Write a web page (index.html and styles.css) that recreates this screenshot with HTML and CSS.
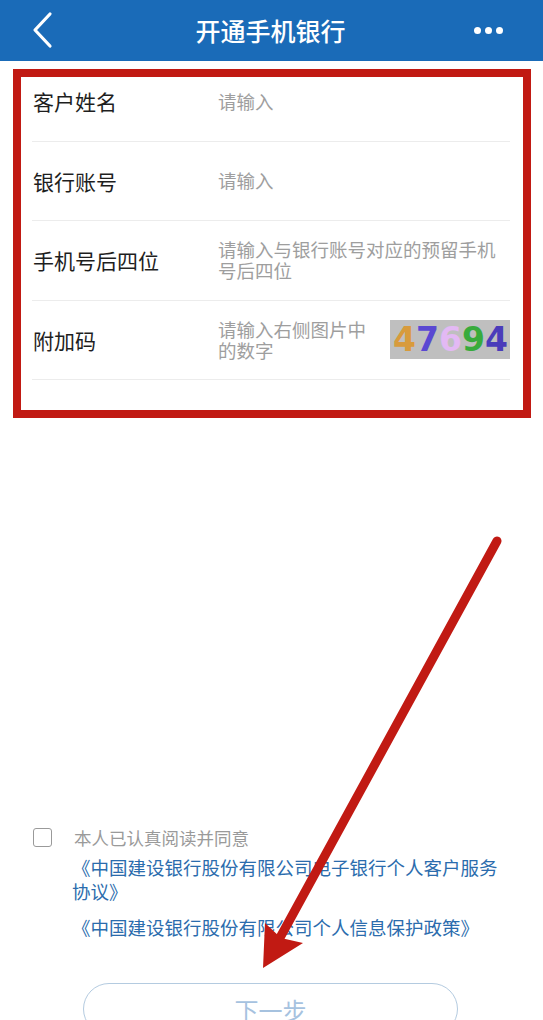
FILE: index.html
```html
<!DOCTYPE html>
<html lang="zh-CN">
<head>
<meta charset="utf-8">
<title>开通手机银行</title>
<link rel="stylesheet" href="styles.css">
</head>
<body>
<div class="page">
  <header class="topbar">
    <svg class="back" width="24" height="40" viewBox="0 0 24 40"><polyline points="19,3 4,19 19,35" fill="none" stroke="#fff" stroke-width="3.2" stroke-linecap="round" stroke-linejoin="round"/></svg>
    <h1 class="title">开通手机银行</h1>
    <div class="more"><span></span><span></span><span></span></div>
  </header>

  <section class="form">
    <div class="row"><div class="label">客户姓名</div><div class="ph">请输入</div></div>
    <div class="row"><div class="label">银行账号</div><div class="ph">请输入</div></div>
    <div class="row"><div class="label">手机号后四位</div><div class="ph wide">请输入与银行账号对应的预留手机号后四位</div></div>
    <div class="row"><div class="label">附加码</div><div class="ph narrow">请输入右侧图片中的数字</div>
      <div class="captcha"><span class="d1">4</span><span class="d2">7</span><span class="d3">6</span><span class="d4">9</span><span class="d5">4</span></div>
    </div>
  </section>

  <section class="agree">
    <div class="check-line"><span class="box"></span><span class="agree-text">本人已认真阅读并同意</span></div>
    <div class="links">
      <p class="link">《中国建设银行股份有限公司电子银行个人客户服务协议》</p>
      <p class="link second">《中国建设银行股份有限公司个人信息保护政策》</p>
    </div>
  </section>

  <div class="btn">下一步</div>

  <div class="mark-box"></div>
  <svg class="mark-arrow" width="543" height="1020" viewBox="0 0 543 1020">
    <line x1="497" y1="541" x2="276" y2="945" stroke="#c11a13" stroke-width="9" stroke-linecap="round"/>
    <polygon points="263,968 265,923 281,938 303,943" fill="#c11a13"/>
  </svg>
</div>
</body>
</html>
```

FILE: styles.css
```css
* { box-sizing: border-box; }
html, body { margin: 0; padding: 0; background: #fff; }
body { font-family: "Noto Sans CJK SC", "Noto Sans", sans-serif; }
.page { position: relative; width: 543px; height: 1020px; overflow: hidden; background: #fff; }

.topbar { height: 61px; background: #1a6bb8; display: flex; align-items: center; justify-content: space-between; padding: 0 40px 0 31px; }
.back { display: block; margin-top: 0; }
.title { margin: 0; font-size: 25px; font-weight: 500; color: #fff; line-height: 1; position: relative; left: 6px; }
.more { display: flex; gap: 4px; }
.more span { width: 7px; height: 7px; border-radius: 50%; background: #fff; display: block; }

.form { padding-top: 1px; }
.row { height: 79.5px; margin: 0 33px 0 32px; border-bottom: 1px solid #ececec; display: flex; align-items: center; }
.label { width: 186px; flex: none; padding-left: 1px; font-size: 21px; color: #1e1e1e; }
.ph { font-size: 18.5px; color: #9e9e9e; line-height: 21px; }
.ph.wide { width: 285px; }
.ph.narrow { width: 160px; }
.captcha { margin-left: auto; width: 120px; height: 39px; background: #bfbfbf; display: flex; align-items: center; justify-content: space-between; padding: 0 2px 0 3px; font-family: "DejaVu Sans", sans-serif; font-weight: bold; font-size: 33px; line-height: 1; }
.d1 { color: #d89b3c; }
.d2 { color: #5a48d2; }
.d3 { color: #e3b9f4; }
.d4 { color: #38ab3c; }
.d5 { color: #4a3cba; }

.agree { margin-top: 447px; padding-left: 33px; }
.check-line { display: flex; align-items: center; height: 20px; }
.box { width: 19px; height: 19px; border: 1.5px solid #9a9a9a; border-radius: 3px; flex: none; }
.agree-text { margin-left: 22px; font-size: 17.5px; color: #9a9a9a; }
.links { padding-left: 39px; margin-top: 8px; width: 480px; }
.link { margin: 0; font-size: 18.5px; line-height: 24px; color: #2b6cad; width: 440px; }
.link.second { margin-top: 12px; }

.btn { margin: 44px 0 0 83px; width: 375px; height: 52px; border: 1.5px solid #b4cbe0; border-radius: 26px; display: flex; align-items: center; justify-content: center; font-size: 24px; color: #a6c2df; }

.mark-box { position: absolute; left: 13px; top: 69px; width: 518px; height: 349px; border: 8px solid #c11a13; }
.mark-arrow { position: absolute; left: 0; top: 0; }
```
